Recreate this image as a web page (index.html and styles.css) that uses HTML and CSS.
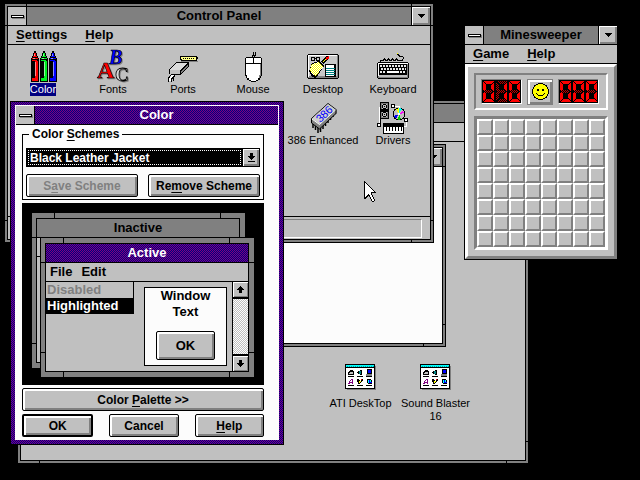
FILE: index.html
```
<!DOCTYPE html>
<html lang="en">
<head>
<meta charset="utf-8">
<title>Control Panel</title>
<link rel="stylesheet" href="styles.css">
</head>
<body>
<svg class="defs" aria-hidden="true">
  <defs>
    <pattern id="dim" width="2" height="2" patternUnits="userSpaceOnUse"><path fill="#b00" d="M0 0h1v1H0zM1 1h1v1H1z"/></pattern>
    <pattern id="aqua" width="2" height="2" patternUnits="userSpaceOnUse"><path fill="#0ff" d="M0 0h2v2H0z"/><path fill="#00a0a0" d="M0 0h1v1H0z"/></pattern>
    <pattern id="straw" width="2" height="2" patternUnits="userSpaceOnUse"><path fill="#ff0" d="M0 0h2v2H0z"/><path fill="#fff" d="M0 0h1v1H0zM1 1h1v1H1z"/></pattern>
    <path id="seg-a" d="M1 1h11L9 4H4z"/>
    <path id="seg-b" d="M12 2v8l-1 1-2-2V5z"/>
    <path id="seg-c" d="M12 21v-8l-1-1-2 2v4z"/>
    <path id="seg-d" d="M1 22h11l-3-3H4z"/>
    <path id="seg-e" d="M1 21v-8l1-1 2 2v4z"/>
    <path id="seg-f" d="M1 2v8l1 1 2-2V5z"/>
    <path id="seg-g" d="M2 11.500l2-1.500h5l2 1.500-2 1.500H4z"/>
    <symbol id="zero" viewBox="0 0 13 23">
      <g fill="#f00"><use href="#seg-a"/><use href="#seg-b"/><use href="#seg-c"/><use href="#seg-d"/><use href="#seg-e"/><use href="#seg-f"/></g>
      <use href="#seg-g" fill="url(#dim)"/>
    </symbol>
    <symbol id="one" viewBox="0 0 13 23">
      <g fill="url(#dim)"><use href="#seg-a"/><use href="#seg-d"/><use href="#seg-e"/><use href="#seg-f"/><use href="#seg-g"/></g>
      <g fill="#f00"><use href="#seg-b"/><use href="#seg-c"/></g>
    </symbol>
    <symbol id="down" viewBox="0 0 7 4"><path d="M0 0h7v1H0zM1 1h5v1H1zM2 2h3v1H2zM3 3h1v1H3z"/></symbol>
    <symbol id="arrow-up" viewBox="0 0 7 7"><path d="M3 0h1v1H3zM2 1h3v1H2zM1 2h5v1H1zM0 3h7v1H0zM2 4h3v3H2z"/></symbol>
    <symbol id="group" viewBox="0 0 32 27">
      <path fill="#808080" d="M2 2h29v24H2z"/>
      <path d="M0 0h30v25H0z"/><path fill="url(#aqua)" d="M1 1h28v2H1z"/><path fill="#fff" d="M1 4h28v20H1z"/>
      <path d="M3 8h1V7h1V6h3v1h1v4H3zM3 12h6v1H3zM12 12h6v1h-6zM21 12h6v1h-6zM3 21h6v1H3zM12 21h6v1h-6zM21 21h6v1h-6z"/>
      <path fill="#c0c0c0" d="M5 8h3v1H5zM4 9h4v1H4z"/>
      <path d="M12 8h1V7h2V6h2v5h-2v-1h-2V9h-1z"/><path fill="#008080" d="M14 7h2v3h-2z"/>
      <path fill="#808080" d="M21 10h6v2h-6z"/><path d="M22 5h5v5h-5z"/><path fill="#00f" d="M23 6h3v3h-3z"/>
      <path fill="#800080" d="M3 19h1v-2h1v-1h1v-1h2v5H7v-1H5v1H3z"/><path fill="#fff" d="M6 16h1v2H5v-1h1z"/>
      <path d="M12 15h2v1h1v1h1v-2h2v2h-1v1h-1v1h-1v1h-2v-2h-1z"/><path fill="#ff0" d="M14 17h2v1h-1v1h-1z"/><path fill="#f00" d="M16 15h1v1h-1z"/>
      <path d="M22 15h4v1h1v4h-4v-1h-1z"/><path fill="#0ff" d="M23 16h3v3h-3z"/><path fill="#00f" d="M24 16h1v2h2v1h-3z"/>
    </symbol>
    <symbol id="crayon" viewBox="0 0 8 32">
      <path d="M3 1h2v2h1v3h1v2h1v24H0V8h1V6h1V3h1z"/>
      <path fill="currentColor" d="M3 3h2v3H3zM2 6h4v1H2zM1 8h6v1H1zM1 10h5v1H1zM4 11h3v17H4zM1 28h6v3H1z"/>
      <path fill="#fff" d="M3 4h1v2H3zM2 8h2v1H2zM4 12h1v14H4z" opacity=".55"/>
    </symbol>
  </defs>
</svg>

<main class="desktop">

  <section class="window program-manager" aria-label="Program Manager">
    <div class="pane">
      <header class="title"></header>
      <nav class="menu"></nav>
      <div class="client">
        <div class="window group-window">
          <div class="pane paper">
            <header class="title"><span class="caption"></span><button class="minimize" aria-label="Maximize"><svg width="7" height="4"><use href="#down"/></svg></button></header>
          </div>
        </div>
        <div class="groups">
          <a class="icon" href="#"><svg width="32" height="27"><use href="#group"/></svg><span>ATI DeskTop</span></a>
          <a class="icon" href="#"><svg width="32" height="27"><use href="#group"/></svg><span>Sound Blaster 16</span></a>
        </div>
      </div>
    </div>
  </section>

  <section class="window control-panel" aria-label="Control Panel">
    <div class="pane">
      <header class="title">
        <button class="system" aria-label="Control menu"><i></i></button>
        <h1 class="caption">Control Panel</h1>
        <button class="minimize" aria-label="Minimize"><svg width="7" height="4"><use href="#down"/></svg></button>
      </header>
      <nav class="menu"><a href="#"><u>S</u>ettings</a><a href="#"><u>H</u>elp</a></nav>
      <div class="applets">
        <a class="icon selected" href="#">
          <svg width="32" height="32" viewBox="0 0 32 32"><use href="#crayon" class="red" x="4" width="8" height="32"/><use href="#crayon" class="green" x="13" width="8" height="32"/><use href="#crayon" class="blue" x="22" width="8" height="32"/></svg>
          <span>Color</span></a>
        <a class="icon" href="#">
          <svg class="smooth letters" width="32" height="32" viewBox="0 0 32 32">
            <text x="12" y="14" font-size="20" font-style="italic" fill="#00f" stroke="#000" stroke-width=".6">B</text>
            <text x="18" y="31" font-size="19" fill="#d8d8d8" stroke="#000" stroke-width=".8">C</text>
            <text x="0" y="28" font-size="24" fill="#f00" stroke="#000" stroke-width=".6">A</text>
          </svg>
          <span>Fonts</span></a>
        <a class="icon" href="#">
          <svg width="32" height="32" viewBox="0 0 32 32">
            <path fill="#808080" d="M14 11h17v1H14z"/>
            <path d="M13 6h17v1h1v2h-1v2H14v-1h-1z"/><path fill="#ff8" d="M14 7h15v3H15V9h-1z"/><path d="M16 8h1v1h-1zM18 8h1v1h-1zM20 8h1v1h-1zM22 8h1v1h-1zM24 8h1v1h-1zM26 8h1v1h-1z"/>
            <path d="M9 12h13v4l-8 9H4v-1H2v-5z"/><path fill="#dcdcdc" d="M9 13h11l-6 7H3z"/><path fill="#808080" d="M21 14v2l-7 8v-3z"/><path fill="#c0c0c0" d="M3 20h10v4H3z"/>
            <path d="M1 32v-3l3-4M6 31v-2l2-4" fill="none" stroke="#000"/><path d="M3 31v-2l3-4" fill="none" stroke="#fff" stroke-width="2"/><path d="M4 32v-2l3-4" fill="none" stroke="#000"/>
          </svg>
          <span>Ports</span></a>
        <a class="icon" href="#">
          <svg width="32" height="32" viewBox="0 0 32 32">
            <path d="M15 7V5h1V2M17 7V5h1V2" fill="none" stroke="#000"/>
            <path d="M9 7h15v1h1v18h-1v2h-1v2h-2v1h-2v1h-5v-1h-2v-1h-2v-2H9v-2H8V8h1z"/>
            <path fill="#fff" d="M9 8h7v5H9zM17 8h7v5h-7zM9 14h15v11h-1v3h-2v2h-2v1h-5v-1h-2v-2h-2v-3H9z"/><path fill="#808080" d="M23 14h1v12h-1zM22 25h1v3h-1z"/>
          </svg>
          <span>Mouse</span></a>
        <a class="icon" href="#">
          <svg width="32" height="32" viewBox="0 0 32 32">
            <path d="M1 4h30v1h1v23h-1v1H1v-1H0V5h1z"/><path fill="#808080" d="M1 5h30v23H1z"/><path fill="#fff" d="M1 5h29v1H2v21H1z"/><path fill="#c8c8c8" d="M2 6h28v20H2z"/>
            <path fill="none" stroke="#000" d="M4.500 7.500h3v3h-3zM9.500 7.500h3v3h-3zM7 8.500h3"/>
            <path stroke="#000" stroke-width="3" d="M15 13l6-6"/><path stroke="#ff0" d="M16 12l4-4"/><path stroke="#f00" stroke-width="2" d="M19 9l3-2"/>
            <path d="M5 13l7-2 5 5-8 12-4-1-3-6z"/><path fill="url(#straw)" d="M5 14l6-2 5 5-7 9-3-1-3-5z"/>
            <path d="M18 14h11v13H18z"/><path fill="#fff" d="M19 15h8v11h-8z"/><path stroke="#008080" d="M19 18.500h9M19 20.500h9M19 22.500h9M19 24.500h9"/>
          </svg>
          <span>Desktop</span></a>
        <a class="icon" href="#">
          <svg width="32" height="32" viewBox="0 0 32 32">
            <path fill="none" stroke="#000" d="M3.500 13v-3h3l1-1 1 1h2l1-1 1 1h2l1-1 1 1h2l1-1 1 1h5l1-2-1-2h-3l-2-2"/><path fill="#ff0" d="M20 3h1v1h-1z"/>
            <path d="M1 12h30v1h1v15h-1v1H1v-1H0V13h1z"/><path fill="#808080" d="M1 13h30v15H1z"/><path fill="#fff" d="M1 13h30v1H2v12H1z"/><path fill="#c0c0c0" d="M2 14h28v13H2z"/>
            <path d="M2 14h28v11H2z"/>
            <path stroke="#e8e8e8" stroke-width="2" stroke-dasharray="2 1" d="M3 16h26M4 19h25M3 22h6M23 22h6"/><path stroke="#fff" stroke-width="2" d="M10 22h12"/>
          </svg>
          <span>Keyboard</span></a>
        <a class="icon enhanced" href="#">
          <svg class="smooth" width="32" height="32" viewBox="0 0 32 32">
            <path stroke="#000" stroke-width="1.500" d="M6 21v6M8.500 23v6M11 25v7M13.500 24v7M16 21v7M18.500 18v7M21 16v6M23.500 13v6M26 10v6M28.500 8v5"/>
            <path fill="#808080" stroke="#000" d="M4.500 17.500L21 2.500l8 6v4L12.500 28l-8-6z"/>
            <path fill="#d0d0d0" d="M5 17.500L21 3l7.500 5.500L12.500 23z"/><path fill="none" stroke="#fff" d="M5 18l7.500 5.500L28.500 9"/>
            <text x="-9" y="4" transform="translate(17 13) rotate(-43)" font-family="Liberation Sans" font-size="11" fill="#00f">386</text>
          </svg>
          <span>386 Enhanced</span></a>
        <a class="icon" href="#">
          <svg width="32" height="32" viewBox="0 0 32 32">
            <path d="M3 1h9v17H3z"/><path fill="#808080" d="M4 2h7v15H4z"/><path fill="#c0c0c0" d="M5 3h5v5H5zM5 11h5v5H5z"/><path d="M6 3h3v1h1v3H9v1H6V7H5V4h1zM6 11h3v1h1v3H9v1H6v-1H5v-3h1z"/><path fill="#c0c0c0" d="M6 4h3v3H6zM6 12h3v3H6z"/><path d="M7 5h1v1H7zM7 13h1v1H7zM4 8h7v3H4z"/>
            <path d="M2.500 6v17" stroke="#000" stroke-width="2"/><path d="M2 6v17M17 5h5l1 2M29 20v5h-3" fill="none" stroke="#fff"/>
            <path d="M14 3h4v4h-4zM0 22h4v4H0zM27 17h4v4h-4z"/><path fill="#fff" d="M15 4h2v2h-2zM1 23h2v2H1zM28 18h2v2h-2z"/>
            <circle cx="22" cy="13" r="6" fill="#c0c0c0" stroke="#000"/><path fill="#ff0" d="M22 13l-3-5 3-1z"/><path fill="#0ff" d="M22 13l0-6 3 1z"/><path fill="#f0f" d="M22 13l4-4 1 3z"/><path fill="#00f" d="M22 13l-5 2 2 3z"/><path fill="#0c0" d="M22 13l2 5-3 1z"/><path fill="#fff" d="M21 12h2v2h-2z"/>
            <path d="M6 22h21v11H6z"/><path fill="#fff" d="M7 26h19v6H7z"/><path d="M9 26h1v4H9zM12 26h1v4h-1zM15 26h1v4h-1zM18 26h1v4h-1zM21 26h1v4h-1zM24 26h1v4h-1z"/>
          </svg>
          <span>Drivers</span></a>
      </div>
      <footer class="status"><div></div></footer>
    </div>
  </section>

  <section class="window minesweeper" aria-label="Minesweeper">
    <header class="title">
      <button class="system" aria-label="Control menu"><i></i></button>
      <h2 class="caption">Minesweeper</h2>
      <button class="minimize" aria-label="Minimize"><svg width="7" height="4"><use href="#down"/></svg></button>
    </header>
    <nav class="menu"><a href="#"><u>G</u>ame</a><a href="#"><u>H</u>elp</a></nav>
    <div class="board">
      <div class="score">
        <div class="led" role="img" aria-label="010"><svg><use href="#zero"/></svg><svg><use href="#one"/></svg><svg><use href="#zero"/></svg></div>
        <button class="face" aria-label="New game">
          <svg width="17" height="17" viewBox="0 0 17 17"><path d="M6 0h5v1h2v1h2v2h1v2h1v5h-1v2h-1v2h-2v1h-2v1H6v-1H4v-1H2v-2H1v-2H0V6h1V4h1V2h2V1h2z"/><path fill="#ff0" d="M6 1h5v1h2v1h1v1h1v2h1v5h-1v2h-1v1h-1v1h-2v1H6v-1H4v-1H3v-1H2v-2H1V6h1V4h1V3h1V2h2z"/><path d="M5 6h2v2H5zM10 6h2v2h-2zM4 10h1v1H4zM12 10h1v1h-1zM5 11h1v1H5zM11 11h1v1h-1zM6 12h5v1H6z"/></svg>
        </button>
        <div class="led" role="img" aria-label="000"><svg><use href="#zero"/></svg><svg><use href="#zero"/></svg><svg><use href="#zero"/></svg></div>
      </div>
      <div class="field" id="field"></div>
    </div>
  </section>

  <section class="dialog" role="dialog" aria-label="Color">
    <div class="dialog-pane">
      <header class="title active">
        <button class="system" aria-label="Control menu"><i></i></button>
        <h2 class="caption">Color</h2>
      </header>
      <form class="form">
        <fieldset>
          <legend><label for="scheme">Color <u>S</u>chemes</label></legend>
          <div class="combo">
            <select id="scheme"><option>Black Leather Jacket</option></select>
            <span class="drop"><svg width="7" height="9" viewBox="0 0 7 9"><path d="M2 0h3v3h2v1H6v1H5v1H4v1H3V6H2V5H1V4H0V3h2zM0 8h7v1H0z"/></svg></span>
          </div>
          <div class="row">
            <button type="button" class="push" disabled><span>S<u>a</u>ve Scheme</span></button>
            <button type="button" class="push"><span>Re<u>m</u>ove Scheme</span></button>
          </div>
        </fieldset>
        <div class="preview">
          <div class="sample inactive"><div class="sample-pane">
            <div class="sample-title">Inactive</div><div class="sample-menu"></div>
          </div></div>
          <div class="sample current"><div class="sample-pane">
            <div class="sample-title active">Active</div>
            <div class="sample-menu"><span>File</span><span>Edit</span></div>
            <div class="sample-body">
              <div class="sample-list"><span class="off">Disabled</span><span class="on">Highlighted</span></div>
              <div class="sample-text">Window<br>Text<button type="button" class="push">OK</button></div>
              <div class="scroll">
                <button type="button" aria-label="Scroll up"><svg width="7" height="7"><use href="#arrow-up"/></svg></button>
                <button type="button" aria-label="Scroll down"><svg class="flip" width="7" height="7"><use href="#arrow-up"/></svg></button>
              </div>
            </div>
          </div></div>
        </div>
        <button type="button" class="push">Color <u>P</u>alette &gt;&gt;</button>
        <div class="row actions">
          <button type="button" class="push default">OK</button>
          <button type="button" class="push">Cancel</button>
          <button type="button" class="push"><span><u>H</u>elp</span></button>
        </div>
      </form>
    </div>
  </section>

  <svg class="pointer" width="13" height="21" viewBox="0 0 13 21" aria-hidden="true"><path d="M0 0h1v1h1v1h1v1h1v1h1v1h1v1h1v1h1v1h1v1h1v1h1v1h1v1H8v2h1v2h1v2h1v2h-1v1H8v-1H7v-2H6v-2H5v-1H4v1H3v1H2v1H0z"/><path fill="#fff" d="M1 2h1v1h1v1h1v1h1v1h1v1h1v1h1v1h1v1h1v1H7v3h1v2h1v2h1v2H8v-2H7v-2H6v-2H5v-1H4v1H3v1H2v1H1z"/></svg>
</main>
<script src="board.js"></script>
</body>
</html>
```
FILE: styles.css
```
* { box-sizing: border-box; }

:root {
  --face: #c0c0c0;
  --shade: #808080;
  --paper: #fcfcfc;
  --weave: repeating-conic-gradient(#800080 0 25%, #000080 0 50%) 0 0 / 2px 2px;
  --weave-frame: repeating-conic-gradient(#000080 0 25%, #800080 0 50%) 0 0 / 2px 2px;
}

body {
  margin: 0;
  background: #000;
  color: #000;
  font: bold 13px/16px "Liberation Sans", Arial, sans-serif;
  overflow: hidden;
}

button, select {
  margin: 0;
  padding: 0;
  border: 0;
  border-radius: 0;
  background: var(--face);
  color: #000;
  font: inherit;
}

a { color: inherit; text-decoration: none; }
u { text-decoration: underline; text-underline-offset: 2px; }
svg { display: block; shape-rendering: crispEdges; }
.smooth { shape-rendering: auto; }
.defs { position: absolute; width: 0; height: 0; }

.desktop { position: relative; min-height: 100vh; }

/* Windows */
.window {
  position: absolute;
  display: flex;
  flex-direction: column;
  padding: 2px;
  border: 1px solid #000;
  background:
    linear-gradient(#000, #000) 21px 0 / 1px 100% no-repeat,
    linear-gradient(#000, #000) right 21px top 0 / 1px 100% no-repeat,
    linear-gradient(#000, #000) 0 21px / 100% 1px no-repeat,
    linear-gradient(#000, #000) left 0 bottom 21px / 100% 1px no-repeat,
    var(--shade);
}

.pane {
  flex: 1;
  display: flex;
  flex-direction: column;
  border: 1px solid #000;
  background: var(--face);
}

.paper { background: var(--paper); }

.program-manager { left: 17px; top: 100px; width: 512px; height: 364px; }
.group-window { left: 4px; top: 2px; width: 421px; height: 203px; }
.control-panel { left: 4px; top: 3px; width: 430px; height: 240px; }
.minesweeper { left: 464px; top: 25px; padding: 0; background: var(--face); }

.title {
  display: flex;
  height: 19px;
  border-bottom: 1px solid #000;
  background: var(--shade);
}

.active { background: var(--weave); color: #fff; }

.caption {
  flex: 1;
  margin: 0;
  font: inherit;
  line-height: 18px;
  text-align: center;
}

.system, .minimize { display: grid; place-items: center; width: 19px; }
.system { border-right: 1px solid #000; }
.system i {
  width: 13px;
  height: 3px;
  border: 1px solid #000;
  background: #fff;
  box-shadow: 1px 1px var(--shade);
}
.minimize {
  border-left: 1px solid #000;
  box-shadow: inset 1px 1px #fff, inset -2px -2px var(--shade);
}

.menu {
  display: flex;
  gap: 18px;
  height: 19px;
  padding-left: 8px;
  border-bottom: 1px solid #000;
  background: var(--face);
  line-height: 18px;
}

/* Icons */
.icon {
  display: flex;
  flex-direction: column;
  align-items: center;
  font-weight: normal;
  font-size: 11px;
  line-height: 13px;
  text-align: center;
}
.icon svg { overflow: visible; }
.letters {
  font: bold 20px "Liberation Serif", serif;
  filter: drop-shadow(1px 1px 0 #808080);
}
.selected span { background: #000080; color: #fff; }
.red { color: #f00; }
.green { color: #0e2; }
.blue { color: #00f; }

.applets {
  flex: 1;
  display: grid;
  grid-template-columns: repeat(6, 70px);
  grid-auto-rows: 46px;
  align-content: start;
  gap: 5px 0;
  padding-top: 5px;
}
.applets span { margin-top: 1px; white-space: nowrap; }
.enhanced { grid-column: 5; }

.status { padding: 2px 8px 1px; border-top: 1px solid #000; }
.status div {
  height: 19px;
  border: 1px solid;
  border-color: var(--shade) #fff #fff var(--shade);
}

.client {
  position: relative;
  flex: 1;
  display: flex;
  flex-direction: column;
  justify-content: flex-end;
}
.groups {
  display: grid;
  grid-template-columns: 75px 75px;
  padding: 0 0 37px 302px;
}
.groups svg { margin-bottom: 6px; }
.groups span { width: 74px; }

/* Minesweeper */
.board {
  display: grid;
  gap: 6px;
  padding: 6px;
  border: 3px solid;
  border-color: #fff var(--shade) var(--shade) #fff;
}
.score {
  display: flex;
  align-items: center;
  justify-content: space-between;
  height: 37px;
  padding: 0 7px 0 5px;
  border: 2px solid;
  border-color: var(--shade) #fff #fff var(--shade);
}
.led {
  display: flex;
  border: 1px solid;
  border-color: var(--shade) #fff #fff var(--shade);
  background: #000;
}
.led svg { width: 13px; height: 23px; }
.face {
  display: grid;
  place-items: center;
  width: 26px;
  height: 26px;
  border: 1px solid var(--shade);
  box-shadow: inset 2px 2px #fff, inset -2px -2px var(--shade);
}
.field {
  display: grid;
  grid-template-columns: repeat(8, 16px);
  grid-auto-rows: 16px;
  border: 3px solid;
  border-color: var(--shade) #fff #fff var(--shade);
}
.field button {
  border: 2px solid;
  border-color: #fff var(--shade) var(--shade) #fff;
}

/* Color dialog */
.dialog {
  position: absolute;
  left: 10px;
  top: 101px;
  width: 274px;
  padding: 3px 4px 4px;
  border: 1px solid #000;
  background: var(--weave-frame);
}
.dialog-pane { padding: 1px 1px 0; background: var(--paper); }

.form {
  display: flex;
  flex-direction: column;
  gap: 3px;
  padding: 1px 14px 3px 6px;
  font-size: 12px;
}

fieldset {
  min-width: 0;
  margin: 0;
  padding: 6px 3px 2px;
  border: 1px solid #000;
}
legend { margin-left: 3px; padding: 0 3px; }

.row { display: flex; justify-content: space-between; gap: 10px; }
.row .push { flex: 1; }
.actions { gap: 16px; }
fieldset .row { margin-top: 7px; }

.combo { display: flex; height: 19px; border: 1px solid #000; }
.combo select {
  flex: 1;
  appearance: none;
  padding: 0 2px;
  border: 1px solid #000;
  outline: 1px dotted #fff;
  outline-offset: -2px;
  background: #000;
  color: #fff;
}
.drop {
  display: grid;
  place-items: center;
  width: 17px;
  border-left: 1px solid #000;
  background: var(--face);
  box-shadow: inset 1px 1px #fff, inset -2px -2px var(--shade);
}

.push {
  height: 23px;
  border: 1px solid #000;
  border-radius: 2px;
  box-shadow: inset 2px 2px #fff, inset -2px -2px var(--shade);
}
.push:disabled { color: var(--shade); }
.default { border-width: 2px; }

/* Scheme preview */
.preview {
  position: relative;
  height: 182px;
  background: #000;
  font-size: 13px;
}
.sample {
  position: absolute;
  display: flex;
  width: 215px;
  padding: 5px 5px 5px 4px;
  border: 1px solid #000;
  background:
    linear-gradient(#000, #000) 22px 0 / 1px 100% no-repeat,
    linear-gradient(#000, #000) right 24px top 0 / 1px 100% no-repeat,
    linear-gradient(#000, #000) 0 24px / 100% 1px no-repeat,
    linear-gradient(#000, #000) left 0 bottom 24px / 100% 1px no-repeat,
    var(--shade);
}
.inactive { left: 9px; top: 9px; height: 157px; }
.current { left: 18px; top: 34px; height: 141px; }
.sample-pane {
  flex: 1;
  display: flex;
  flex-direction: column;
  border: 1px solid #000;
  background: var(--face);
}
.sample-title, .sample-menu {
  height: 19px;
  border-bottom: 1px solid #000;
  line-height: 18px;
}
.sample-title { background: var(--shade); text-align: center; }
.sample-title.active { background: var(--weave-frame); }
.sample-menu { display: flex; gap: 9px; padding-left: 4px; }
.sample-body { flex: 1; display: flex; }
.sample-list { display: flex; flex-direction: column; width: 88px; }
.sample-list span { padding-left: 1px; }
.off { border-right: 1px solid #000; color: var(--shade); }
.on { background: #000; color: #fff; }
.sample-text {
  flex: 1;
  display: flex;
  flex-direction: column;
  align-items: center;
  margin: 5px 5px 5px 10px;
  border: 1px solid #000;
  background: var(--paper);
  text-align: center;
}
.sample-text .push { width: 59px; height: 29px; margin-top: 11px; }
.scroll {
  display: flex;
  flex-direction: column;
  justify-content: space-between;
  border-left: 1px solid #000;
  background: repeating-conic-gradient(#fff 0 25%, #c0c0c0 0 50%) 0 0 / 2px 2px;
}
.scroll button {
  display: grid;
  place-items: center;
  width: 15px;
  height: 15px;
  box-shadow: inset 1px 1px #fff, inset -1px -1px var(--shade), 0 2px #000;
}
.scroll button:last-child { box-shadow: inset 1px 1px #fff, inset -1px -1px var(--shade), 0 -2px #000; }
.flip { transform: rotate(180deg); }

.pointer { position: absolute; left: 364px; top: 181px; }
```
FILE: board.js
```
const field = document.getElementById("field");
for (let i = 0; i < 64; i++) {
  const cell = document.createElement("button");
  cell.setAttribute("aria-label", `Square ${i + 1}`);
  field.append(cell);
}
```
